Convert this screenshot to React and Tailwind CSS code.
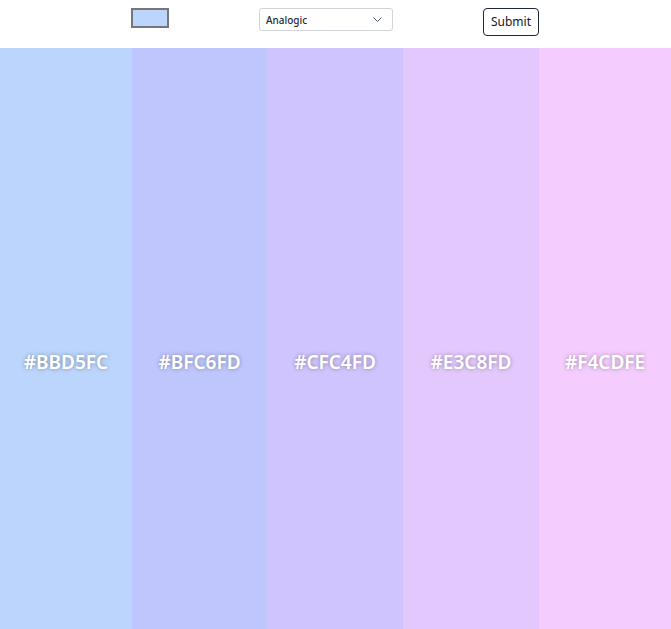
import React from "react";

const colors = [
  { hex: "#BBD5FC", w: "w-[132px]", bg: "bg-[#bbd5fc]" },
  { hex: "#BFC6FD", w: "w-[135px]", bg: "bg-[#bfc6fd]" },
  { hex: "#CFC4FD", w: "w-[136px]", bg: "bg-[#cfc4fd]" },
  { hex: "#E3C8FD", w: "w-[136px]", bg: "bg-[#e3c8fd]" },
  { hex: "#F4CDFE", w: "w-[132px]", bg: "bg-[#f4cdfe]" },
];

export default function App() {
  return (
    <div className="w-full bg-white font-['Noto_Sans',sans-serif]">
      <header className="h-12 flex justify-center items-start pt-2 pr-px gap-[90px]">
        <div className="w-[38px] h-5 border-2 border-[#767676] bg-[#bbd5fc]" />
        <div className="w-[134px] h-[23px] border border-[#d1d5db] rounded-[3px] flex items-center justify-between pl-[6px] pr-[10px]">
          <span className="text-[10px] font-medium text-[#1f2937] leading-none">Analogic</span>
          <svg width="9" height="5" viewBox="0 0 9 5" fill="none">
            <path d="M0.5 0.5 L4.5 4.5 L8.5 0.5" stroke="#4b5563" strokeWidth="1" />
          </svg>
        </div>
        <button className="w-14 h-7 border border-[#1f2937] rounded-[4px] text-[12px] text-[#111827] leading-none">
          Submit
        </button>
      </header>
      <div className="flex h-screen">
        {colors.map((c) => (
          <div key={c.hex} className={`${c.w} ${c.bg} h-full flex items-center justify-center`}>
            <span className="text-white text-[19px] font-semibold [text-shadow:0_0_4px_rgba(0,0,0,0.35)]">
              {c.hex}
            </span>
          </div>
        ))}
      </div>
    </div>
  );
}
